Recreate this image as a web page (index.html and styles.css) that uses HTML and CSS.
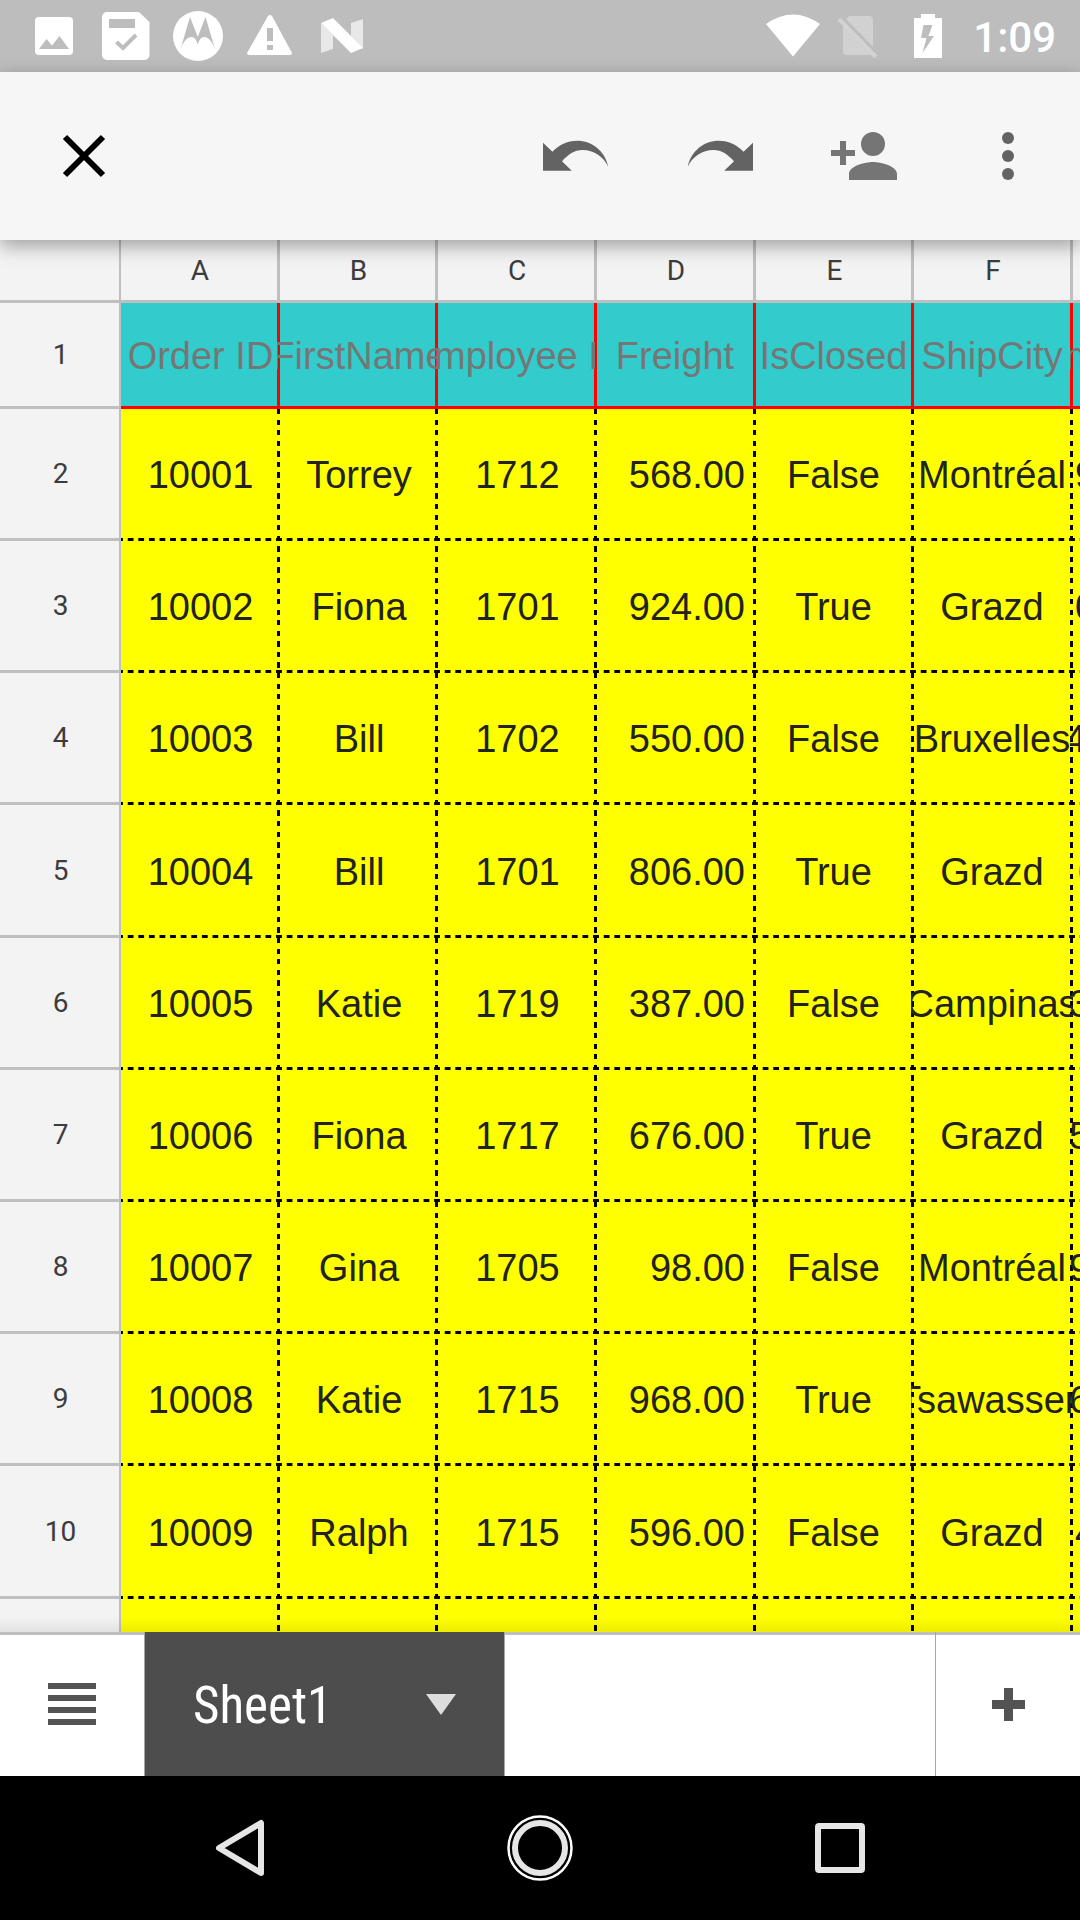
FILE: index.html
```html
<!DOCTYPE html>
<html lang="en">
<head>
<meta charset="utf-8">
<meta name="viewport" content="width=device-width, initial-scale=1">
<title>Sheet1</title>
<link rel="stylesheet" href="styles.css">
</head>
<body>
<div class="app">
  <header class="status">
    <div class="status-group">
      <svg class="icon" viewBox="0 0 72 72" aria-hidden="true"><path fill="#fff" fill-rule="evenodd" d="M20 17h31a4 4 0 0 1 4 4v30a4 4 0 0 1-4 4H21a4 4 0 0 1-4-4V21a4 4 0 0 1 3-4zM21 49h30L41.500 36 34 45.500 28.500 39z"/></svg>
      <svg class="icon" viewBox="0 0 72 72" aria-hidden="true"><path fill="#fff" fill-rule="evenodd" d="M17 12h32l10.500 10v33a5 5 0 0 1-5 5H17a5 5 0 0 1-5-5V17a5 5 0 0 1 5-5zM19 19v9h26v-9z"/><path fill="none" stroke="#bdbdbd" stroke-width="4" d="M26.500 42l6.500 6L46 35"/></svg>
      <svg class="icon" viewBox="0 0 72 72" aria-hidden="true"><circle cx="36" cy="36" r="25" fill="#fff"/><path fill="#bdbdbd" d="M18.500 49L28 17l7.800 20L43.500 17 53 49C50 41 46 37 42.500 37c-3.500 0-5.500 3-6.700 7.500C34.500 40 33 37 29.500 37c-4 0-8 4-11 12z"/></svg>
      <svg class="icon" viewBox="0 0 72 72" aria-hidden="true"><path fill="#fff" fill-rule="evenodd" d="M34 16q2-2 4 0l20 37q0 2-2 2H15q-2 0-2-2zM33 28v13h6V28zM33 45v5h6v-5z"/></svg>
      <svg class="icon" viewBox="0 0 72 72" aria-hidden="true"><path fill="#fff" opacity=".65" d="M15 23l12 12v14l-12 4zM45 23l12-4v30L45 36z"/><path fill="#fff" d="M15 23l12-5 30 30-12 5z"/></svg>
    </div>
    <div class="status-group">
      <svg class="icon" viewBox="0 0 72 72" aria-hidden="true"><path fill="#fff" d="M9 24q27-19 54 0L36 56.500z"/></svg>
      <svg class="icon-narrow" viewBox="0 0 63 72" aria-hidden="true"><path fill="#fff" opacity=".3" d="M20 16h20q4 0 4 4v31q0 4-4 4H18q-4 0-4-4V22z"/><path stroke="#bdbdbd" stroke-width="4" d="M14 19l34 35"/><path stroke="#d3d3d3" stroke-width="4" d="M10 19l37 38"/></svg>
      <svg class="icon" viewBox="0 0 72 72" aria-hidden="true"><path fill="#fff" fill-rule="evenodd" d="M29 14h14v4h7v40H22V18h7zM31.500 25L29 38h5.500l-4 15L42 36h-5.500L40.500 25z"/></svg>
      <time class="clock">1:09</time>
    </div>
  </header>

  <nav class="toolbar" aria-label="Editor">
    <button class="tool" type="button" aria-label="Close"><svg class="icon" viewBox="0 0 72 72"><path fill="none" stroke="#000" stroke-width="6" d="M17 17l38 38M55 17L17 55"/></svg></button>
    <div class="tools">
      <button class="tool" type="button" aria-label="Undo"><svg class="icon" viewBox="0 0 72 72"><path fill="#636363" d="M3 22.700l9.500 9C19 25 27 20.700 37 20.700c15 0 28 10.300 31.200 26C64 37 54 30 42.500 30 34.500 30 28 34.500 22 41.300l9.800 9.400H3z"/></svg></button>
      <button class="tool" type="button" aria-label="Redo"><svg class="icon" viewBox="0 0 72 72"><path fill="#636363" d="M69 22.700l-9.500 9C53 25 45 20.700 35 20.700c-15 0-28 10.300-31.200 26C8 37 18 30 29.500 30 37.500 30 44 34.500 50 41.300l-9.800 9.400H69z"/></svg></button>
      <button class="tool" type="button" aria-label="Add people"><svg class="icon" viewBox="0 0 72 72"><g fill="#757575"><circle cx="45" cy="24" r="12"/><path d="M45 42c-8 0-24 4-24 12v6h48v-6c0-8-16-12-24-12zM18 30v-9h-6v9H3v6h9v9h6v-9h9v-6z"/></g></svg></button>
      <button class="tool" type="button" aria-label="More options"><svg class="icon" viewBox="0 0 72 72"><g fill="#636363"><circle cx="36" cy="18" r="6"/><circle cx="36" cy="36" r="6"/><circle cx="36" cy="54" r="6"/></g></svg></button>
    </div>
  </nav>

  <main class="sheet">
    <table class="grid">
      <colgroup><col class="c-head"><col class="c-wide"><col class="c-slim"><col class="c-wide"><col class="c-wide"><col class="c-slim"><col class="c-wide"><col class="c-wide"></colgroup>
      <thead>
        <tr><th></th><th scope="col">A</th><th scope="col">B</th><th scope="col">C</th><th scope="col">D</th><th scope="col">E</th><th scope="col">F</th><th scope="col"></th></tr>
      </thead>
      <tbody>
        <tr class="titles"><th scope="row">1</th><td><div>Order ID</div></td><td><div>FirstName</div></td><td><div>Employee ID</div></td><td><div>Freight</div></td><td><div>IsClosed</div></td><td><div>ShipCity</div></td><td class="next cut"><div>n</div></td></tr>
        <tr><th scope="row">2</th><td><div>10001</div></td><td><div>Torrey</div></td><td><div>1712</div></td><td class="num"><div>568.00</div></td><td><div>False</div></td><td><div>Montréal</div></td><td class="next inset"><div>9</div></td></tr>
        <tr><th scope="row">3</th><td><div>10002</div></td><td><div>Fiona</div></td><td><div>1701</div></td><td class="num"><div>924.00</div></td><td><div>True</div></td><td><div>Grazd</div></td><td class="next inset"><div>0</div></td></tr>
        <tr><th scope="row">4</th><td><div>10003</div></td><td><div>Bill</div></td><td><div>1702</div></td><td class="num"><div>550.00</div></td><td><div>False</div></td><td><div>Bruxelles</div></td><td class="next cut"><div>4</div></td></tr>
        <tr class="tall"><th scope="row">5</th><td><div>10004</div></td><td><div>Bill</div></td><td><div>1701</div></td><td class="num"><div>806.00</div></td><td><div>True</div></td><td><div>Grazd</div></td><td class="next far"><div>0</div></td></tr>
        <tr><th scope="row">6</th><td><div>10005</div></td><td><div>Katie</div></td><td><div>1719</div></td><td class="num"><div>387.00</div></td><td><div>False</div></td><td><div>Campinas</div></td><td class="next"><div>3</div></td></tr>
        <tr><th scope="row">7</th><td><div>10006</div></td><td><div>Fiona</div></td><td><div>1717</div></td><td class="num"><div>676.00</div></td><td><div>True</div></td><td><div>Grazd</div></td><td class="next"><div>5</div></td></tr>
        <tr><th scope="row">8</th><td><div>10007</div></td><td><div>Gina</div></td><td><div>1705</div></td><td class="num"><div>98.00</div></td><td><div>False</div></td><td><div>Montréal</div></td><td class="next"><div>9</div></td></tr>
        <tr><th scope="row">9</th><td><div>10008</div></td><td><div>Katie</div></td><td><div>1715</div></td><td class="num"><div>968.00</div></td><td><div>True</div></td><td><div>Tsawassen</div></td><td class="next"><div>6</div></td></tr>
        <tr class="tall"><th scope="row">10</th><td><div>10009</div></td><td><div>Ralph</div></td><td><div>1715</div></td><td class="num"><div>596.00</div></td><td><div>False</div></td><td><div>Grazd</div></td><td class="next inset"><div>4</div></td></tr>
        <tr><th></th><td></td><td></td><td></td><td></td><td></td><td></td><td></td></tr>
      </tbody>
    </table>
  </main>

  <footer class="sheet-bar">
    <button class="bar-button" type="button" aria-label="All sheets"><svg class="icon" viewBox="0 0 72 72"><path fill="#535353" d="M12 15h48v6H12zM12 27h48v6H12zM12 39h48v6H12zM12 51h48v6H12z"/></svg></button>
    <button class="tab" type="button"><span>Sheet1</span><svg class="caret" viewBox="0 0 30 21" aria-hidden="true"><path fill="#ddd" d="M0 0h30L15 21z"/></svg></button>
    <button class="bar-button add" type="button" aria-label="Add sheet"><svg class="icon" viewBox="0 0 72 72"><path fill="#535353" d="M32 20h9v12h12v9H41v12h-9V41H20v-9h12z"/></svg></button>
  </footer>

  <nav class="system" aria-label="System">
    <button class="tool" type="button" aria-label="Back"><svg class="icon" viewBox="0 0 72 72"><path fill="none" stroke="#e6e6e6" stroke-width="6" stroke-linejoin="round" d="M57 11v50L15 36z"/></svg></button>
    <button class="tool" type="button" aria-label="Home"><svg class="icon" viewBox="0 0 72 72"><circle cx="36" cy="36" r="31.500" fill="none" stroke="#fff" stroke-width="2.500"/><circle cx="36" cy="36" r="25" fill="none" stroke="#e6e6e6" stroke-width="6"/></svg></button>
    <button class="tool" type="button" aria-label="Overview"><svg class="icon" viewBox="0 0 72 72"><rect x="14" y="14" width="44" height="44" rx="1" fill="none" stroke="#e6e6e6" stroke-width="6" stroke-linejoin="round"/></svg></button>
  </nav>
</div>
</body>
</html>
```

FILE: styles.css
```css
* {
  box-sizing: border-box;
}

body {
  margin: 0;
  font-family: Roboto, sans-serif;
}

button {
  padding: 0;
  border: 0;
  background: none;
  font: inherit;
  color: inherit;
}

.app {
  display: flex;
  flex-direction: column;
  height: 100vh;
  overflow: hidden;
}

.icon,
.icon-narrow {
  display: block;
  flex: none;
  width: 72px;
  height: 72px;
}

.icon-narrow {
  width: 63px;
}

/* Status bar */
.status {
  display: flex;
  flex: none;
  justify-content: space-between;
  height: 72px;
  padding: 0 24px 0 18px;
  background: #bdbdbd;
  color: #fff;
}

.status-group {
  display: flex;
  align-items: center;
}

.clock {
  margin-left: 9px;
  padding-top: 4px;
  font-size: 42px;
  font-weight: 500;
  line-height: 72px;
}

/* Editor toolbar */
.toolbar {
  position: relative;
  z-index: 1;
  display: flex;
  flex: none;
  align-items: center;
  justify-content: space-between;
  height: 168px;
  padding: 0 36px 0 48px;
  background: #f6f6f6;
  box-shadow: 0 6px 18px rgba(0, 0, 0, 0.35);
}

.tools {
  display: flex;
  gap: 72px;
}

.tool {
  width: 72px;
  height: 72px;
}

/* Spreadsheet */
.sheet {
  position: relative;
  flex: 1;
  min-height: 0;
  overflow: hidden;
  background: #f3f3f3;
}

.sheet::after {
  content: "";
  position: absolute;
  inset: auto 0 0;
  height: 15px;
  background: linear-gradient(transparent, rgba(0, 0, 0, 0.07));
}

.grid {
  width: 1232px;
  table-layout: fixed;
  border-collapse: separate;
  border-spacing: 0;
}

.c-head { width: 121px; }
.c-wide { width: 159px; }
.c-slim { width: 158px; }

.grid th {
  padding: 0 0 0 2px;
  border: solid #bfbfbf;
  border-width: 0 3px 3px 0;
  background: #f3f3f3;
  color: #3c3c3c;
  font-size: 28px;
  font-weight: 400;
}

.grid th:first-child {
  border-right-width: 2px;
}

.grid thead th {
  height: 63px;
}

.grid td {
  --down: repeating-linear-gradient(#000 0 4%, transparent 4% 8%);
  height: 132px;
  padding: 0;
  background:
    var(--down) right / 3px 100% no-repeat,
    linear-gradient(to right, #000 2px, transparent 2px 7px, #000 7px) bottom left / calc(100% / 15) 3px repeat-x,
    #ff0;
  color: #222;
  font-family: "Liberation Sans", Arial, sans-serif;
  font-size: 38px;
  line-height: 44px;
  white-space: nowrap;
}

.grid tr:nth-child(odd) td {
  --down: repeating-linear-gradient(transparent 0 4%, #000 4% 8%);
}

.grid .tall td {
  height: 133px;
}

.grid .titles td {
  height: 106px;
  background:
    linear-gradient(#f00, #f00) right / 3px 100% no-repeat,
    linear-gradient(#f00, #f00) bottom / 100% 3px no-repeat,
    #3cc;
  color: #767676;
}

.grid td div {
  position: relative;
  display: flex;
  justify-content: center;
  margin-left: -3px;
  overflow: hidden;
}

.grid td:nth-child(2) div {
  margin-left: 0;
}

.grid td:nth-child(3) div,
.grid td:nth-child(4) div {
  padding-left: 3px;
}

.grid .num div {
  justify-content: flex-end;
  padding-right: 11px;
}

.grid .next div {
  display: block;
  text-indent: -1px;
}

.grid .cut div { text-indent: -5px; }
.grid .inset div { text-indent: 5px; }
.grid .far div { text-indent: 8px; }

/* Sheet tabs */
.sheet-bar {
  display: flex;
  flex: none;
  height: 144px;
  background: linear-gradient(#bfbfbf 3px, #fff 3px);
}

.bar-button {
  display: grid;
  place-items: center;
  width: 144px;
}

.add {
  width: 145px;
  margin-left: auto;
  border-left: 1px solid #a6a6a6;
}

.tab {
  display: flex;
  align-items: center;
  justify-content: space-between;
  width: 361px;
  padding: 0 48px;
  border: solid #a6a6a6;
  border-width: 0 1px;
  background: #4d4d4d;
  color: #fff;
  font-family: "Roboto Condensed", Roboto, sans-serif;
  font-size: 51px;
}

.tab span {
  padding-top: 2px;
}

.caret {
  width: 30px;
  height: 21px;
}

/* System navigation */
.system {
  display: flex;
  flex: none;
  align-items: center;
  justify-content: center;
  gap: 228px;
  height: 144px;
  background: #000;
}
```
